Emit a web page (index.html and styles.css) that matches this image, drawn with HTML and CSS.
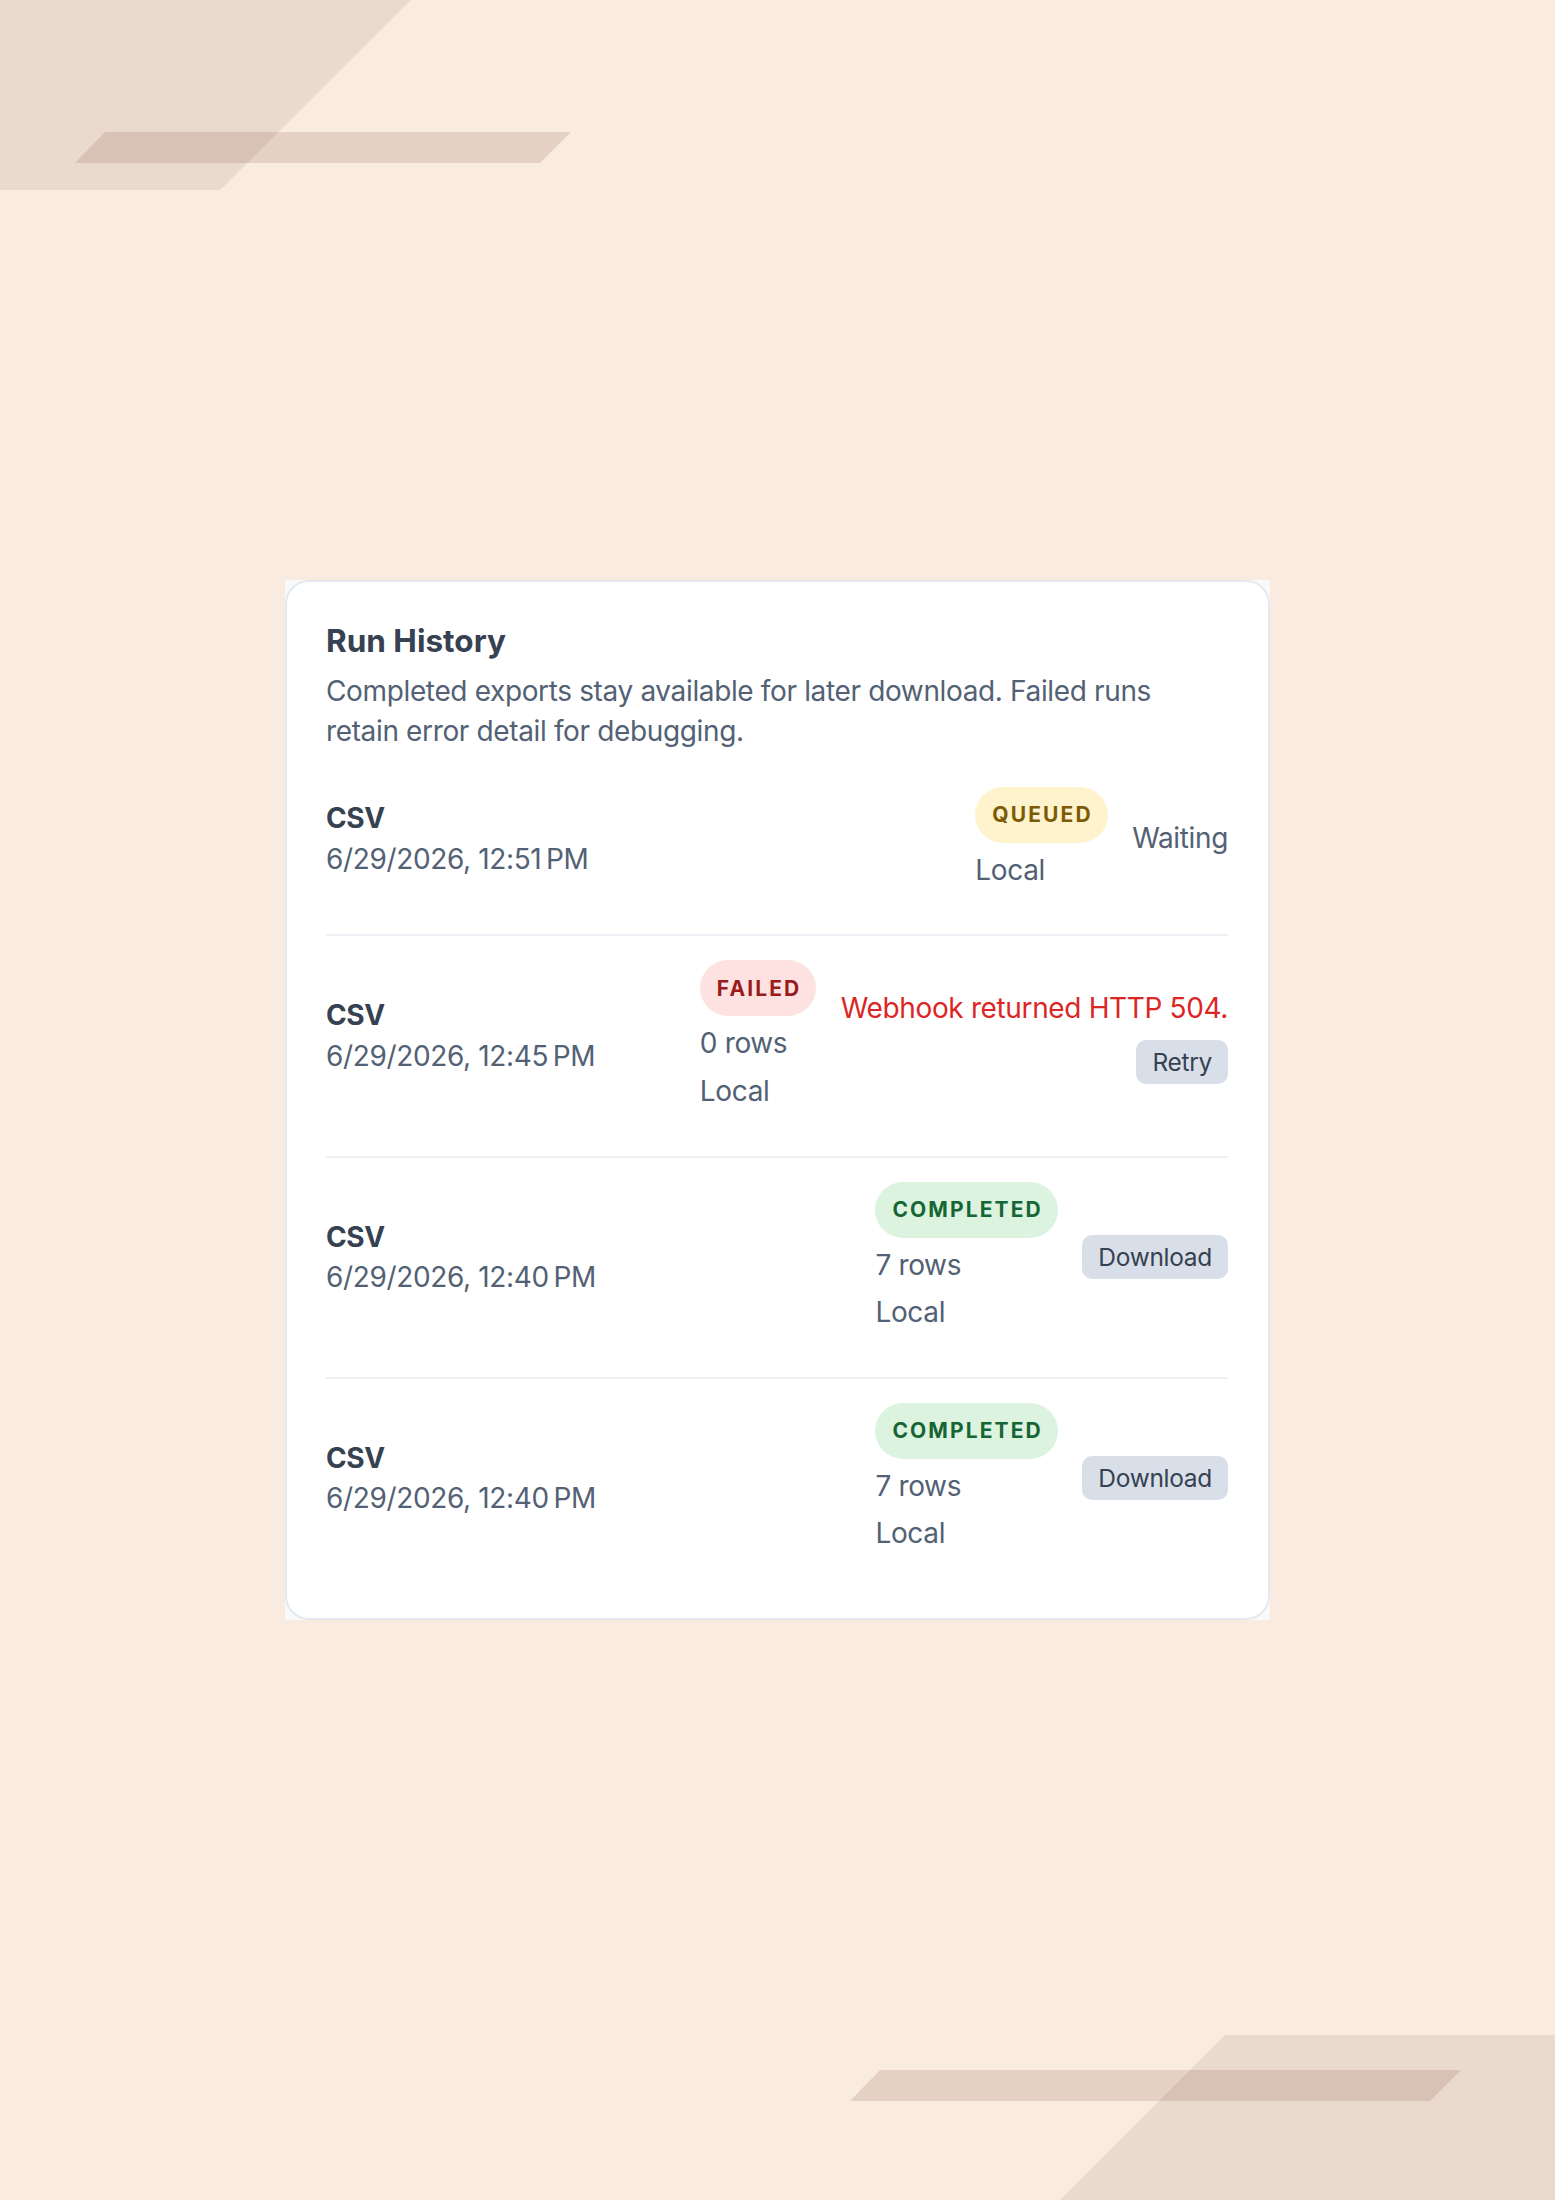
FILE: index.html
```html
<!DOCTYPE html>
<html lang="en">
<head>
  <meta charset="UTF-8" />
  <meta name="viewport" content="width=device-width, initial-scale=1.0"/>
  <title>Run History</title>
  <link rel="stylesheet" href="styles.css">
</head>
<body>
  <svg class="deco deco-top" width="571" height="190" viewBox="0 0 571 190">
    <polygon points="0,0 411,0 220,190 0,190" class="deco-big"/>
    <polygon points="105,132 571,132 540,163 75,163" class="deco-bar"/>
  </svg>
  <svg class="deco deco-bottom" width="705" height="165" viewBox="0 0 705 165">
    <polygon points="375,0 705,0 705,165 210,165" class="deco-big"/>
    <polygon points="30,35 611,35 580,66 0,66" class="deco-bar"/>
  </svg>

  <div class="frame">
    <section class="card">
      <h2 class="card-title">Run History</h2>
      <p class="card-desc">Completed exports stay available for later download. Failed runs retain error detail for debugging.</p>

      <ul class="runs">
        <li class="run">
          <div class="run-info">
            <div class="run-format">CSV</div>
            <div class="run-date">6/29/2026, 12:51&#8239;PM</div>
          </div>
          <div class="run-side">
            <div class="run-meta">
              <span class="badge badge-queued">Queued</span>
              <span>Local</span>
            </div>
            <div class="run-action">
              <span>Waiting</span>
            </div>
          </div>
        </li>

        <li class="run">
          <div class="run-info">
            <div class="run-format">CSV</div>
            <div class="run-date">6/29/2026, 12:45&#8239;PM</div>
          </div>
          <div class="run-side">
            <div class="run-meta">
              <span class="badge badge-failed">Failed</span>
              <span>0 rows</span>
              <span>Local</span>
            </div>
            <div class="run-action">
              <span class="run-error">Webhook returned HTTP 504.</span>
              <button type="button" class="btn">Retry</button>
            </div>
          </div>
        </li>

        <li class="run">
          <div class="run-info">
            <div class="run-format">CSV</div>
            <div class="run-date">6/29/2026, 12:40&#8239;PM</div>
          </div>
          <div class="run-side">
            <div class="run-meta">
              <span class="badge badge-completed">Completed</span>
              <span>7 rows</span>
              <span>Local</span>
            </div>
            <div class="run-action">
              <button type="button" class="btn">Download</button>
            </div>
          </div>
        </li>

        <li class="run">
          <div class="run-info">
            <div class="run-format">CSV</div>
            <div class="run-date">6/29/2026, 12:40&#8239;PM</div>
          </div>
          <div class="run-side">
            <div class="run-meta">
              <span class="badge badge-completed">Completed</span>
              <span>7 rows</span>
              <span>Local</span>
            </div>
            <div class="run-action">
              <button type="button" class="btn">Download</button>
            </div>
          </div>
        </li>
      </ul>
    </section>
  </div>
</body>
</html>
```

FILE: styles.css
```css
body {
  font-family: Inter, "Noto Sans", sans-serif;
  background-color: #f9ebdf;
  color: #536174;
  letter-spacing: -0.36px;
  margin: 0;
  padding: 0;
  min-height: 100vh;
  display: flex;
  align-items: center;
  justify-content: center;
  position: relative;
  overflow: hidden;
}

.deco {
  position: absolute;
  display: block;
}
.deco-top {
  top: 0;
  left: 0;
}
.deco-bottom {
  right: 0;
  bottom: 0;
}
.deco-big {
  fill: rgba(112, 72, 54, 0.1);
}
.deco-bar {
  fill: rgba(112, 72, 54, 0.155);
}

.frame {
  background-color: #f8f9fb;
  position: relative;
}
.card {
  box-sizing: border-box;
  width: 985px;
  background-color: #fff;
  border: 2px solid #e3e9f1;
  border-radius: 24px;
  padding: 40px 40px 40px 39px;
}

.card-title {
  margin: 0;
  font-size: 31.5px;
  line-height: 38px;
  font-weight: 700;
  letter-spacing: 0;
  color: #364152;
}
.card-desc {
  margin: 10.5px 0 0;
  font-size: 28px;
  line-height: 40.6px;
}

.runs {
  list-style: none;
  margin: 11px 0 0;
  padding: 0;
  display: flex;
  flex-direction: column;
  gap: 20px;
}
.run {
  display: flex;
  justify-content: space-between;
  align-items: center;
  padding: 24px 0;
  font-size: 28px;
  line-height: 40.6px;
}
.run + .run {
  border-top: 2px solid #edf1f5;
}
.run-format {
  font-weight: 700;
  color: #364152;
}

.run-side {
  display: flex;
  align-items: center;
  gap: 24.5px;
}
.run-meta {
  display: flex;
  flex-direction: column;
  align-items: flex-start;
  gap: 7px;
}
.run-action {
  display: flex;
  flex-direction: column;
  align-items: flex-end;
  gap: 12.25px;
}
.run-error {
  color: #dc2626;
}

.badge {
  display: inline-block;
  padding: 12.25px 15px 12.25px 17px;
  border-radius: 999px;
  font-size: 21px;
  line-height: 31.5px;
  font-weight: 700;
  letter-spacing: 2.1px;
  text-transform: uppercase;
}
.badge-queued {
  background-color: #fef3cd;
  color: #7c5a06;
}
.badge-failed {
  background-color: #fee2e2;
  color: #991b1b;
}
.badge-completed {
  background-color: #dcf4df;
  color: #166534;
}

.btn {
  font-family: inherit;
  font-size: 24.5px;
  line-height: 30px;
  letter-spacing: -0.3px;
  padding: 7px 16px;
  border: none;
  border-radius: 10px;
  background-color: #d9dfe8;
  color: #364152;
  cursor: pointer;
}
```
